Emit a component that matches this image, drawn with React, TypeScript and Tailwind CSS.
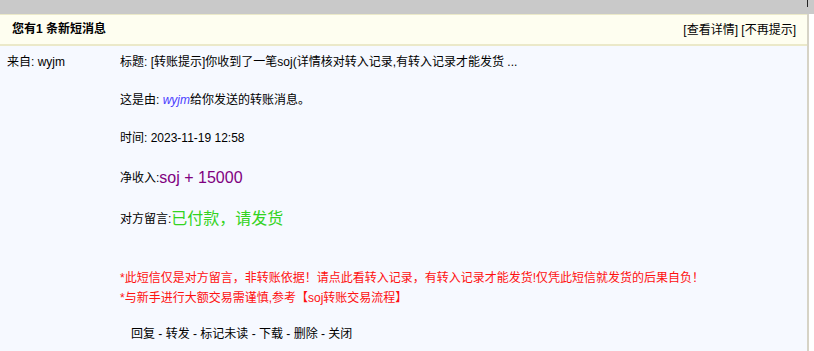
export default function App() {
  const font = "font-['Liberation_Sans','Noto_Sans_CJK_SC',sans-serif]";
  return (
    <div className={`w-[814px] h-[351px] bg-white text-[12px] text-black ${font}`}>
      <div className="flex h-[14px] bg-[#c9c9c9]">
        <div className="w-[807px]" />
        <div className="w-px h-[7px] bg-[#222]" />
      </div>
      <div className="w-[809px] h-[337px] border-r-2 border-[#d6d3c6] bg-[#f6f9ff]">
        <div className="flex items-center justify-between h-[32px] pl-[12px] pr-[11px] bg-[#fefef0] border-t border-b-2 border-[#ebe9c9]">
          <span className="font-bold leading-[19px]">您有1 条新短消息</span>
          <span className="leading-[19px] pt-[2px]">[查看详情] [不再提示]</span>
        </div>
        <div className="flex pt-[7px]">
          <div className="w-[120px] pl-[7px] leading-[19px]">来自: wyjm</div>
          <div className="flex flex-col leading-[19px]">
            <div>标题: [转账提示]你收到了一笔soj(详情核对转入记录,有转入记录才能发货 ...</div>
            <div className="h-[19px]" />
            <div>
              这是由: <span className="italic text-[#4a3cff]">wyjm</span>给你发送的转账消息。
            </div>
            <div className="h-[19px]" />
            <div>时间: 2023-11-19 12:58</div>
            <div className="h-[19px]" />
            <div className="h-[22px] flex items-end pb-[1px]">
              净收入:<span className="text-[16px] text-[#800080] leading-[20px]">soj + 15000</span>
            </div>
            <div className="h-[19px]" />
            <div className="h-[22px] flex items-end pb-[1px]">
              对方留言:<span className="text-[16px] text-[#33d322] leading-[20px]">已付款，请发货</span>
            </div>
            <div className="h-[38px]" />
            <div className="text-[#ff1010] leading-[20px]">
              *此短信仅是对方留言，非转账依据！请点此看转入记录，有转入记录才能发货!仅凭此短信就发货的后果自负！
            </div>
            <div className="text-[#ff1010] leading-[20px]">*与新手进行大额交易需谨慎,参考【soj转账交易流程】</div>
            <div className="h-[17px]" />
            <div className="pl-[11px] leading-[19px]">回复 - 转发 - 标记未读 - 下载 - 删除 - 关闭</div>
          </div>
        </div>
      </div>
    </div>
  );
}
